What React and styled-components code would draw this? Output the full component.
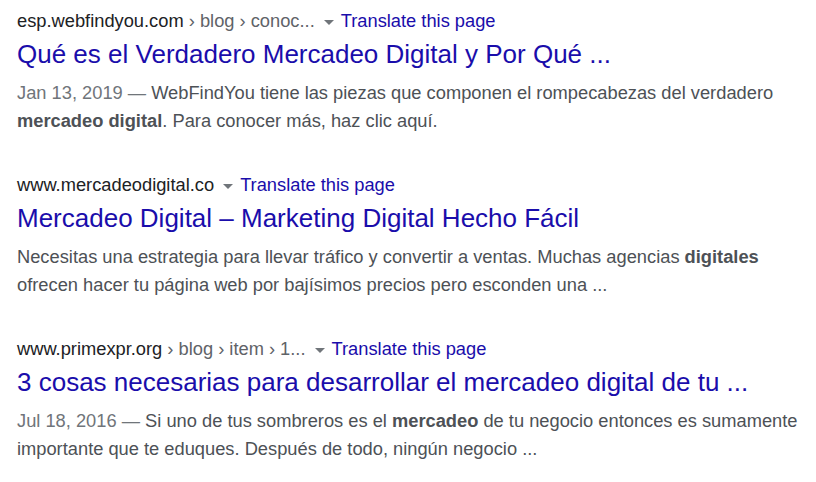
import React from "react";
import styled, { createGlobalStyle } from "styled-components";

const GlobalStyle = createGlobalStyle`
  body {
    margin: 0;
    background: #fff;
    font-family: "Liberation Sans", Arial, sans-serif;
  }
`;

const Page = styled.div`
  padding: 10px 17px 0;
  display: flex;
  flex-direction: column;
  gap: 39px;
`;

const Result = styled.div`
  display: flex;
  flex-direction: column;
`;

const UrlRow = styled.div`
  font-size: 18.3px;
  line-height: 22px;
  white-space: nowrap;
`;

const Host = styled.span`
  color: #202124;
`;

const Crumbs = styled.span`
  color: #5f6368;
`;

const Caret = styled.span`
  display: inline-block;
  width: 0;
  height: 0;
  vertical-align: middle;
  margin: 0 7px 0 9px;
  border-left: 5px solid transparent;
  border-right: 5px solid transparent;
  border-top: 5px solid #70757a;
`;

const Translate = styled.a`
  color: #1a0dab;
  text-decoration: none;
`;

const Title = styled.a`
  display: block;
  color: #1a0dab;
  font-size: 26px;
  line-height: 30px;
  margin-top: 7px;
  text-decoration: none;
  white-space: nowrap;
`;

const Snippet = styled.div`
  color: #4d5156;
  font-size: 18.3px;
  line-height: 28px;
  margin-top: 10px;
  white-space: nowrap;
  b {
    font-weight: bold;
  }
`;

const Date = styled.span`
  color: #70757a;
`;

const results = [
  {
    host: "esp.webfindyou.com",
    crumbs: " › blog › conoc...",
    title: "Qué es el Verdadero Mercadeo Digital y Por Qué ...",
    date: "Jan 13, 2019",
    snippet: (
      <>
        WebFindYou tiene las piezas que componen el rompecabezas del verdadero
        <br />
        <b>mercadeo digital</b>. Para conocer más, haz clic aquí.
      </>
    ),
  },
  {
    host: "www.mercadeodigital.co",
    crumbs: "",
    title: "Mercadeo Digital – Marketing Digital Hecho Fácil",
    snippet: (
      <>
        Necesitas una estrategia para llevar tráfico y convertir a ventas. Muchas agencias <b>digitales</b>
        <br />
        ofrecen hacer tu página web por bajísimos precios pero esconden una ...
      </>
    ),
  },
  {
    host: "www.primexpr.org",
    crumbs: " › blog › item › 1...",
    title: "3 cosas necesarias para desarrollar el mercadeo digital de tu ...",
    date: "Jul 18, 2016",
    snippet: (
      <>
        Si uno de tus sombreros es el <b>mercadeo</b> de tu negocio entonces es sumamente
        <br />
        importante que te eduques. Después de todo, ningún negocio ...
      </>
    ),
  },
];

export default function App() {
  return (
    <>
      <GlobalStyle />
      <Page>
        {results.map((r) => (
          <Result key={r.host}>
            <UrlRow>
              <Host>{r.host}</Host>
              {r.crumbs && <Crumbs>{r.crumbs}</Crumbs>}
              <Caret />
              <Translate href="#">Translate this page</Translate>
            </UrlRow>
            <Title href="#">{r.title}</Title>
            <Snippet>
              {r.date && <Date>{r.date} — </Date>}
              {r.snippet}
            </Snippet>
          </Result>
        ))}
      </Page>
    </>
  );
}
